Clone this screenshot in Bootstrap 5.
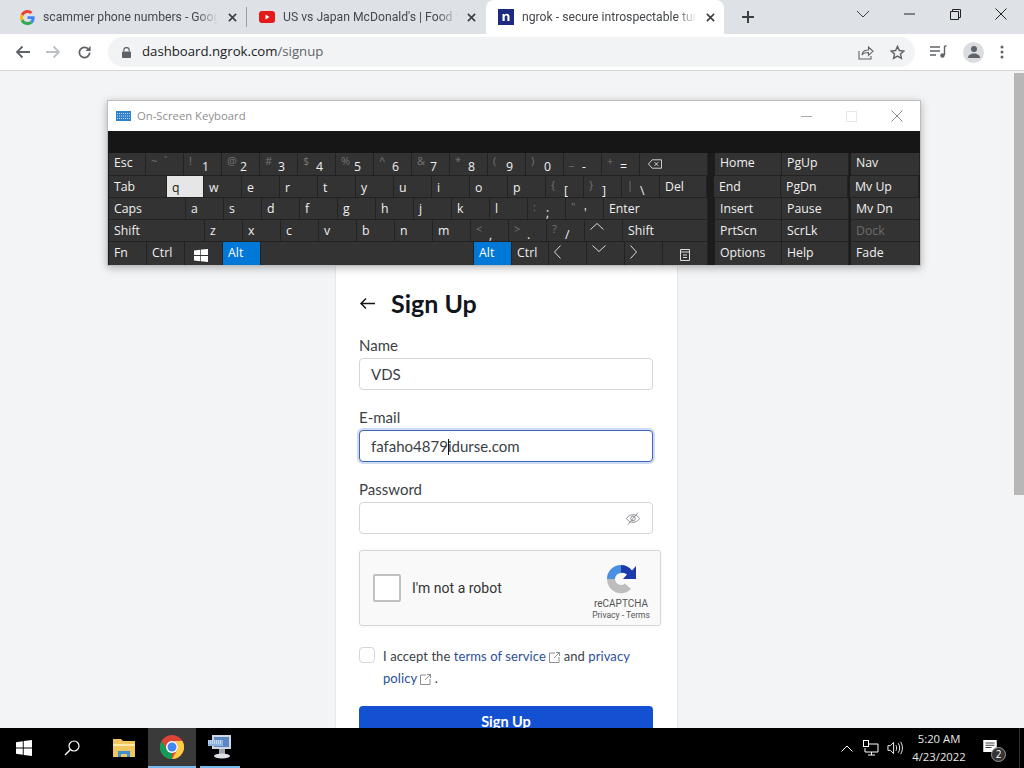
<!DOCTYPE html>
<html lang="en">
<head>
<meta charset="utf-8">
<title>ngrok - secure introspectable tunnels</title>
<link rel="stylesheet" href="https://cdn.jsdelivr.net/npm/bootstrap@5.3.0/dist/css/bootstrap.min.css">
<style>
html,body{height:768px;overflow:hidden}
body{width:1024px;font-family:"Open Sans","Liberation Sans",sans-serif;background:#f3f4f6}
.shell{height:768px;position:relative}
.tabstrip{height:34px;background:#dee1e6;padding-left:8px}
.tabitem{width:238px;height:34px;font-family:Roboto,"Liberation Sans",sans-serif;font-size:12.200px;color:#45484c;padding:0 8px 0 12px;white-space:nowrap}
.tabitem.tab-on{background:#fff;border-radius:8px 8px 0 0;margin-left:1px}
.tabsep{width:1px;height:20px;background:#9aa0a6;align-self:center}
.tabtitle{width:175px;overflow:hidden;margin-left:8px;-webkit-mask-image:linear-gradient(90deg,#000 88%,transparent);mask-image:linear-gradient(90deg,#000 88%,transparent)}
.tabx{margin-left:auto;margin-right:1px}
.plus{margin-left:18px}
.winctl{margin-left:auto;width:168px;height:28px;align-self:flex-start;padding-right:17px}
.toolbar{height:37px;background:#fff;border-bottom:1px solid #d3d5d8;padding-left:15px}
.navicons{width:93px}
.omnibox{width:807px;height:30px;background:#f1f3f4;border-radius:15px;padding:0 10px 0 14px;font-size:13.200px;color:#5f6368}
.omnibox b{font-weight:400;color:#202124}
.locksp{margin-right:11px}
.toolend{margin-left:15px;width:74px}
.avatarbg{width:21px;height:21px;border-radius:50%;background:#dadce0}
.pagearea{height:657px;overflow:hidden;position:relative;padding-left:335px}
.signcol{width:343px;height:550px;margin-top:130px;background:#fff;border:1px solid #e6e8ea;padding:86px 24px 0 23px;font-family:Lato,"Liberation Sans",sans-serif;color:#3c3f46;flex:none}
.titlerow{height:30px;margin-bottom:18px}
.signtitle{font-size:25px;font-weight:700;color:#12151c;margin:0 0 0 16px;line-height:30px}
.form-label.fieldlabel{font-size:15px;line-height:18px;margin-bottom:4px;display:block;color:#3c3f46}
.form-control.fieldbox{width:294px;height:32px;border:1px solid #d4d6da;border-radius:4px;background:#fff;font-size:15px;line-height:18px;padding:0 12px 0 11px;margin-bottom:18px;color:#3c3f46}
.form-control.fieldbox.fieldfocus{border:1px solid #3f66b5;box-shadow:0 0 0 2px #cfdbf3}
.caret{width:1px;height:16px;background:#111;display:inline-block;margin:0 -1px 0 0;vertical-align:-3px}
.robotbox{width:302px;height:76px;background:#f9f9f9;border:1px solid #d6d6d6;border-radius:3px;box-shadow:0 0 3px rgba(0,0,0,.08);margin-top:-2px;padding-left:13px;font-family:Roboto,"Liberation Sans",sans-serif}
.robotcheck{width:28px;height:28px;background:#fff;border:2px solid #c1c1c1;border-radius:2px}
.robottext{font-size:14px;color:#333;margin-left:11px}
.robotlogo{margin-left:auto;width:70px;margin-right:4px;padding-top:8px;color:#555}
.robotlogo svg{margin-bottom:2px}
.robotlogo span{font-size:10px;line-height:13px}
.robotlogo small{font-size:8.500px;line-height:11px;white-space:nowrap}
.acceptrow{margin-top:19px;font-size:13px;letter-spacing:.08px;line-height:22px;height:44px}
.form-check-input.acceptbox{width:16px;height:16px;border:1px solid #d4d6da;border-radius:4px;margin:2px 8px 0 0;flex:none}
.acceptrow a{color:#2b4f9b;text-decoration:none}
.btn.signbtn{width:294px;height:44px;margin-top:17px;background:#1450d2;border:0;color:#fff;font-size:14.500px;font-weight:700;border-radius:4px 4px 0 0;padding:0 0 12px;line-height:32px}
.scrollthumb{position:absolute;right:0;top:2px;width:10px;height:422px;background:#b7b7b7}
.taskbar{height:40px;background:#000;color:#fff;font-size:12px}
.tbslot{width:48px;height:40px}
.tbslot.tb-shift{margin-left:4px}
.tbslot.tb-active{background:#3a3a3a;border-bottom:2px solid #76b9ed}
.tbslot.tb-open{width:40px;margin-left:4px;border-bottom:2px solid #76b9ed}
.tray{margin-left:auto;height:40px}
.traychev{margin-right:10px}
.clockbox{width:70px;font-size:11.300px;line-height:18px;margin-left:1px;text-align:center;color:#e8e8e8}
.notearea{width:46px;height:40px;position:relative;margin-left:4px}
.noteicon{margin:-4px 0 0 5px}
.notebadge{position:absolute;left:13px;top:19px;width:15px;height:15px;border-radius:50%;background:#333;border:1px solid #999;font-size:10px;line-height:13px;text-align:center}
.desksep{position:absolute;left:41px;top:0;width:1px;height:40px;background:#333}
.oskwin{position:absolute;left:107px;top:100px;width:814px;height:166px;border:1px solid #bdbdbd;background:#1c1c1c;box-shadow:0 2px 8px rgba(0,0,0,.28)}
.osktitle{height:30px;background:#fff;font-size:11.300px;color:#8f8f8f;padding-left:8px}
.osktitle svg.oskglyph{margin-right:6px}
.oskctrls{margin-left:auto;width:119px;padding-right:17px}
.oskband{height:22px;background:#161616}
.oskrow{height:22px;padding-left:1px}
.oskrow.rowfirst{height:23px}
.oskrow.rowfirst .keypad{height:23px;padding-top:2px}
.oskrow.rowlast{height:23px}
.oskrow.rowlast .keypad{height:23px;border-bottom:0}
.keypad{display:flex;font-size:12.300px;line-height:16px;color:#f0f0f0;background:#333;height:22px;width:38px;padding:3px 0 0 5px;border-right:1px solid #222;border-bottom:1px solid #222;flex:none;overflow:hidden}
.keypad.kw37{width:37px}
.keypad.kwtab{width:58px}
.keypad.kwcaps{width:77px}
.keypad.kwshift{width:96px}
.keypad.kwback{width:68px;padding-left:8px}
.keypad.kwdel{width:47px}
.keypad.kwenter{width:104px}
.keypad.kwshift2{width:85px}
.keypad.kwspace{width:213px}
.keypad.kwmenu{width:45px}
.keypad.kwh{width:67px}
.keypad.kwp{width:67px}
.keypad.kwnav{width:69px}
.keypad.kgap{margin-left:7px}
.keypad.kgap2{margin-left:2px}
.keypad.keyon{background:#e6e6e6;color:#222}
.keypad.keyblue{background:#0078d7;color:#fff}
.keypad.keydim{color:#6d6d6d}
.keypad.keylow{padding-top:4px}
.keysym{font-size:11px;color:#747474;width:13px;flex:none;line-height:14px;margin-top:-1px}
.keydig{line-height:14px;margin-top:5px}
.iconctr{align-items:center;padding-left:9px}
</style>
</head>
<body>
<div class="shell d-flex flex-column">
  <div class="tabstrip d-flex align-items-center">
    <div class="tabitem d-flex align-items-center">
      <svg width="15" height="15" viewBox="0 0 48 48"><path fill="#EA4335" d="M24 9.500c3.500 0 6.700 1.200 9.200 3.600l6.900-6.900C35.900 2.400 30.500 0 24 0 14.600 0 6.500 5.400 2.600 13.200l8 6.200C12.400 13.700 17.700 9.500 24 9.500z"/><path fill="#4285F4" d="M47 24.500c0-1.600-.1-3.100-.4-4.500H24v9h12.900c-.6 3-2.200 5.500-4.800 7.200l7.700 6c4.500-4.200 7.200-10.300 7.200-17.700z"/><path fill="#FBBC05" d="M10.600 28.600C10.100 27.200 9.800 25.600 9.800 24s.3-3.200.8-4.600l-8-6.200C.9 16.400 0 20.100 0 24s.9 7.600 2.600 10.800l8-6.200z"/><path fill="#34A853" d="M24 48c6.500 0 11.900-2.100 15.900-5.800l-7.700-6c-2.200 1.400-4.900 2.300-8.200 2.300-6.300 0-11.600-4.200-13.500-9.900l-8 6.200C6.500 42.600 14.600 48 24 48z"/></svg>
      <span class="tabtitle ms-2">scammer phone numbers - Google</span>
      <svg class="tabx" width="9" height="9" viewBox="0 0 10 10"><path d="M1 1l8 8M9 1l-8 8" stroke="#3c4043" stroke-width="1.800"/></svg>
    </div>
    <div class="tabsep"></div>
    <div class="tabitem d-flex align-items-center">
      <svg width="16" height="12" viewBox="0 0 16 12"><rect width="16" height="12" rx="3" fill="#e61919"/><path d="M6.500 3.500v5l4-2.500z" fill="#fff"/></svg>
      <span class="tabtitle">US vs Japan McDonald's | Food Wars</span>
      <svg class="tabx" width="9" height="9" viewBox="0 0 10 10"><path d="M1 1l8 8M9 1l-8 8" stroke="#3c4043" stroke-width="1.800"/></svg>
    </div>
    <div class="tabitem tab-on d-flex align-items-center">
      <svg width="16" height="16" viewBox="0 0 16 16"><rect width="16" height="16" fill="#1d2a80"/><path d="M4.500 12V5h2v1c.6-.8 1.400-1.200 2.400-1.200 1.700 0 2.600 1 2.600 2.900V12h-2.100V8c0-.9-.4-1.400-1.200-1.400s-1.500.6-1.500 1.500V12z" fill="#fff"/></svg>
      <span class="tabtitle">ngrok - secure introspectable tunnels</span>
      <svg class="tabx" width="9" height="9" viewBox="0 0 10 10"><path d="M1 1l8 8M9 1l-8 8" stroke="#3c4043" stroke-width="1.800"/></svg>
    </div>
    <svg class="plus" width="12" height="12" viewBox="0 0 12 12"><path d="M6 0v12M0 6h12" stroke="#3c4043" stroke-width="2"/></svg>
    <div class="winctl d-flex align-items-center justify-content-between">
      <svg width="14" height="8" viewBox="0 0 14 8"><path d="M1 1l6 6 6-6" fill="none" stroke="#3c4043"/></svg>
      <svg width="11" height="2" viewBox="0 0 11 2"><path d="M0 1h11" stroke="#222"/></svg>
      <svg width="11" height="11" viewBox="0 0 11 11"><path d="M.5 2.500h8v8h-8zM2.500 2.500v-2h8v8h-2" fill="none" stroke="#222"/></svg>
      <svg width="12" height="12" viewBox="0 0 12 12"><path d="M.5.500l11 11M11.500.500l-11 11" stroke="#222"/></svg>
    </div>
  </div>
  <div class="toolbar d-flex align-items-center">
    <div class="navicons d-flex align-items-center gap-3">
      <svg width="15" height="14" viewBox="0 0 15 14"><path d="M15 7H2M7.500 1.500L2 7l5.500 5.500" fill="none" stroke="#5f6368" stroke-width="1.800"/></svg>
      <svg width="15" height="14" viewBox="0 0 15 14"><path d="M0 7h13M7.500 1.500L13 7l-5.500 5.500" fill="none" stroke="#bdc1c6" stroke-width="1.800"/></svg>
      <svg width="15" height="15" viewBox="0 0 16 16"><path d="M13.500 8A5.500 5.500 0 1 1 11.800 4" fill="none" stroke="#5f6368" stroke-width="1.900"/><path d="M14.500 1v5.500H9z" fill="#5f6368"/></svg>
    </div>
    <div class="omnibox d-flex align-items-center">
      <svg width="9" height="11" viewBox="0 0 10 12" class="locksp"><path d="M2 5V3.500a3 3 0 0 1 6 0V5" fill="none" stroke="#5f6368" stroke-width="1.300"/><rect y="5" width="10" height="7" rx="1" fill="#5f6368"/></svg>
      <span><b>dashboard.ngrok.com</b>/signup</span>
      <span class="ms-auto d-flex align-items-center gap-3">
        <svg width="16" height="15" viewBox="0 0 16 15"><path d="M1 6v8h12v-3" fill="none" stroke="#5f6368" stroke-width="1.100"/><path d="M4 10c.5-3.500 3-5 6.500-5V2L15 6.300l-4.500 4V7.500C8 7.500 5.500 8 4 10z" fill="none" stroke="#5f6368" stroke-width="1.100"/></svg>
        <svg width="15" height="15" viewBox="0 0 16 16"><path d="M8 1.500l2 4.400 4.800.5-3.600 3.200 1 4.700L8 11.900 3.800 14.300l1-4.700L1.200 6.400 6 5.900z" fill="none" stroke="#5f6368" stroke-width="1.500"/></svg>
      </span>
    </div>
    <div class="toolend d-flex align-items-center justify-content-between">
      <svg width="17" height="14" viewBox="0 0 17 14"><path d="M0 2h10M0 6h10M0 10h6M14.500 1v9" stroke="#5f6368" stroke-width="1.400"/><path d="M14.500 1h2" stroke="#5f6368" stroke-width="1.400"/><circle cx="12.500" cy="10.500" r="2.200" fill="#5f6368"/></svg>
      <span class="avatarbg d-flex align-items-center justify-content-center"><svg width="14" height="14" viewBox="0 0 14 14"><circle cx="7" cy="4" r="3" fill="#5f6368"/><path d="M1 13c0-3 3-4.500 6-4.500s6 1.500 6 4.500z" fill="#5f6368"/></svg></span>
      <svg width="4" height="14" viewBox="0 0 4 14"><circle cx="2" cy="2" r="1.500" fill="#5f6368"/><circle cx="2" cy="7" r="1.500" fill="#5f6368"/><circle cx="2" cy="12" r="1.500" fill="#5f6368"/></svg>
    </div>
  </div>
  <div class="pagearea d-flex">
    <div class="signcol">
      <div class="titlerow d-flex align-items-center">
        <svg width="16" height="13" viewBox="0 0 16 13"><path d="M16 6.500H2M7 1.500L2 6.500l5 5" fill="none" stroke="#12151c" stroke-width="1.500"/></svg>
        <h1 class="signtitle">Sign Up</h1>
      </div>
      <label class="form-label fieldlabel">Name</label>
      <div class="form-control fieldbox d-flex align-items-center">VDS</div>
      <label class="form-label fieldlabel">E-mail</label>
      <div class="form-control fieldbox fieldfocus d-flex align-items-center"><span>fafaho4879<i class="caret"></i>idurse.com</span></div>
      <label class="form-label fieldlabel">Password</label>
      <div class="form-control fieldbox d-flex align-items-center justify-content-end">
        <svg width="14" height="13" viewBox="0 0 14 13"><path d="M.5 6.500C2 4 4.300 2.700 7 2.700s5 1.300 6.500 3.800C12 9 9.700 10.300 7 10.300S2 9 .5 6.500z" fill="none" stroke="#8d8f94"/><circle cx="7" cy="6.500" r="2.300" fill="none" stroke="#8d8f94"/><path d="M2 12.500L12 .5" stroke="#8d8f94"/></svg>
      </div>
      <div class="robotbox d-flex align-items-center">
        <div class="robotcheck"></div>
        <div class="robottext">I'm not a robot</div>
        <div class="robotlogo d-flex flex-column align-items-center">
          <svg width="32" height="32" viewBox="0 0 32 32"><path d="M2 16A14 14 0 0 1 16 2v8a6 6 0 0 0-6 6z" fill="#4a90e2"/><path d="M16 2A14 14 0 0 1 27 7.500L31 3v13H18l4-4.500A7 7 0 0 0 16 10z" fill="#1c3aa9"/><path d="M2 16h8a6 6 0 0 0 6 6 6 6 0 0 0 4-1.500l6 5.500A14 14 0 0 1 2 16z" fill="#bdbdbd"/></svg>
          <span>reCAPTCHA</span>
          <small>Privacy - Terms</small>
        </div>
      </div>
      <div class="acceptrow d-flex">
        <input class="form-check-input acceptbox" type="checkbox" aria-label="Accept">
        <div>I accept the <a href="#">terms of service <svg width="11" height="11" viewBox="0 0 11 11"><path d="M6 1H.5v9.500H10V5M7 .5h3.500V4M10.500.5L5 6" fill="none" stroke="#8d8f94"/></svg></a> and <a href="#">privacy policy <svg width="11" height="11" viewBox="0 0 11 11"><path d="M6 1H.5v9.500H10V5M7 .5h3.500V4M10.500.5L5 6" fill="none" stroke="#8d8f94"/></svg></a> .</div>
      </div>
      <button class="signbtn btn btn-primary" type="button">Sign Up</button>
    </div>
    <div class="scrollthumb"></div>
  </div>
  <div class="taskbar d-flex align-items-center">
    <div class="tbslot d-flex align-items-center justify-content-center">
      <svg width="16" height="16" viewBox="0 0 16 16"><path d="M0 2.200L6.800 1.200V7.500H0zM7.700 1.100L16 0v7.500H7.700zM0 8.500h6.800v6.300L0 13.800zM7.700 8.500H16V16l-8.300-1.100z" fill="#fff"/></svg>
    </div>
    <div class="tbslot d-flex align-items-center justify-content-center">
      <svg width="16" height="16" viewBox="0 0 16 16"><circle cx="10" cy="6" r="5" fill="none" stroke="#fff" stroke-width="1.200"/><path d="M6.500 9.500L1 15" stroke="#fff" stroke-width="1.400"/></svg>
    </div>
    <div class="tbslot tb-shift d-flex align-items-center justify-content-center">
      <svg width="22" height="18" viewBox="0 0 22 18"><path d="M0 0h8l2 2h12v16H0z" fill="#f0c75e"/><path d="M0 5h22v2H0z" fill="#ffe9a6"/><path d="M5 18v-6h12v6h-3v-3H8v3z" fill="#3f8fd2"/></svg>
    </div>
    <div class="tbslot tb-active d-flex align-items-center justify-content-center">
      <svg width="24" height="24" viewBox="0 0 24 24"><circle cx="12" cy="12" r="12" fill="#db4437"/><path d="M12 24A12 12 0 0 1 1.600 6L7 15a6 6 0 0 0 5 3z" fill="#0f9d58"/><path d="M12 6h10.400A12 12 0 0 1 12 24l5.200-9A6 6 0 0 0 12 6z" fill="#ffcd40"/><circle cx="12" cy="12" r="6" fill="#fff"/><circle cx="12" cy="12" r="4.500" fill="#4285f4"/></svg>
    </div>
    <div class="tbslot tb-open d-flex align-items-center justify-content-center">
      <svg width="24" height="26" viewBox="0 0 24 26"><rect x="4" y="1" width="19" height="14" fill="#cfd8e3"/><rect x="6" y="3" width="15" height="10" fill="#5a86c5"/><rect x="0" y="6" width="15" height="6" fill="#8fb2dd"/><path d="M0 7h14M0 9h14" stroke="#fff" stroke-dasharray="1 1"/><path d="M11 15h6v5h-6z" fill="#9aa3ad"/><ellipse cx="14" cy="22" rx="8" ry="2.500" fill="#dfe3e7"/></svg>
    </div>
    <div class="tray d-flex align-items-center">
      <svg class="traychev" width="12" height="7" viewBox="0 0 12 7"><path d="M.5 6.500L6 1l5.500 5.500" fill="none" stroke="#fff"/></svg>
      <svg width="16" height="16" viewBox="0 0 16 16"><path d="M6 4h9v8H2V8M8.500 12v3M5 15h7" fill="none" stroke="#fff"/><rect x=".5" y=".5" width="5" height="6" fill="none" stroke="#fff"/></svg>
      <svg class="ms-2" width="16" height="16" viewBox="0 0 17 16"><path d="M1 5.500h2.500L7 2v12l-3.500-3.500H1zM9.500 5c1 1.800 1 4.200 0 6M12 3c2 3 2 7 0 10M14.500 1.500c2.500 4 2.500 9 0 13" fill="none" stroke="#fff"/></svg>
      <div class="clockbox"><div>5:20 AM</div><div>4/23/2022</div></div>
      <div class="notearea d-flex align-items-center">
        <svg class="noteicon" width="14" height="12" viewBox="0 0 18 16"><path d="M0 0h18v16H0z" fill="#fff"/><path d="M3 4h12M3 7h12M3 10h8" stroke="#000"/></svg>
        <span class="notebadge">2</span>
        <span class="desksep"></span>
      </div>
    </div>
  </div>
  <div class="oskwin">
    <div class="osktitle d-flex align-items-center">
      <svg class="oskglyph" width="15" height="10" viewBox="0 0 15 10"><rect width="15" height="10" fill="#2f7fc9"/><path d="M1 2.500h13M1 5h13M1 7.500h13" stroke="#bcdcf5" stroke-dasharray="1 1"/></svg>
      <span>On-Screen Keyboard</span>
      <div class="oskctrls d-flex align-items-center justify-content-between">
        <svg width="11" height="1" viewBox="0 0 11 1"><path d="M0 .5h11" stroke="#a8a8a8"/></svg>
        <svg width="11" height="11" viewBox="0 0 11 11"><rect x=".5" y=".5" width="10" height="10" fill="none" stroke="#e8e8e8"/></svg>
        <svg width="12" height="12" viewBox="0 0 12 12"><path d="M.5.500l11 11M11.500.500l-11 11" stroke="#8a8a8a"/></svg>
      </div>
    </div>
    <div class="oskband"></div>
    <div class="oskrow rowfirst d-flex">
      <div class="keypad kw37">Esc</div>
      <div class="keypad"><span class="keysym">~</span><span class="keysym">`</span></div>
      <div class="keypad"><span class="keysym">!</span><span class="keydig">1</span></div>
      <div class="keypad"><span class="keysym">@</span><span class="keydig">2</span></div>
      <div class="keypad"><span class="keysym">#</span><span class="keydig">3</span></div>
      <div class="keypad"><span class="keysym">$</span><span class="keydig">4</span></div>
      <div class="keypad"><span class="keysym">%</span><span class="keydig">5</span></div>
      <div class="keypad"><span class="keysym">^</span><span class="keydig">6</span></div>
      <div class="keypad"><span class="keysym">&amp;</span><span class="keydig">7</span></div>
      <div class="keypad"><span class="keysym">*</span><span class="keydig">8</span></div>
      <div class="keypad"><span class="keysym">(</span><span class="keydig">9</span></div>
      <div class="keypad"><span class="keysym">)</span><span class="keydig">0</span></div>
      <div class="keypad"><span class="keysym">_</span><span class="keydig">-</span></div>
      <div class="keypad"><span class="keysym">+</span><span class="keydig">=</span></div>
      <div class="keypad kwback"><svg class="mt-1" width="14" height="10" viewBox="0 0 15 10"><path d="M4.500.500h10v9h-10L.5 5z" fill="none" stroke="#ddd"/><path d="M7 3l4 4M11 3l-4 4" stroke="#ddd"/></svg></div>
      <div class="keypad kwh kgap">Home</div>
      <div class="keypad kwp">PgUp</div>
      <div class="keypad kwnav kgap2">Nav</div>
    </div>
    <div class="oskrow d-flex">
      <div class="keypad kwtab">Tab</div>
      <div class="keypad kw37 keyon keylow">q</div>
      <div class="keypad keylow">w</div>
      <div class="keypad keylow">e</div>
      <div class="keypad keylow">r</div>
      <div class="keypad keylow">t</div>
      <div class="keypad keylow">y</div>
      <div class="keypad keylow">u</div>
      <div class="keypad keylow">i</div>
      <div class="keypad keylow">o</div>
      <div class="keypad keylow">p</div>
      <div class="keypad"><span class="keysym">{</span><span class="keydig">[</span></div>
      <div class="keypad"><span class="keysym">}</span><span class="keydig">]</span></div>
      <div class="keypad"><span class="keysym">|</span><span class="keydig">\</span></div>
      <div class="keypad kwdel">Del</div>
      <div class="keypad kwh kgap">End</div>
      <div class="keypad kwp">PgDn</div>
      <div class="keypad kwnav kgap2">Mv Up</div>
    </div>
    <div class="oskrow d-flex">
      <div class="keypad kwcaps">Caps</div>
      <div class="keypad">a</div>
      <div class="keypad">s</div>
      <div class="keypad">d</div>
      <div class="keypad">f</div>
      <div class="keypad">g</div>
      <div class="keypad">h</div>
      <div class="keypad">j</div>
      <div class="keypad">k</div>
      <div class="keypad">l</div>
      <div class="keypad"><span class="keysym">:</span><span class="keydig">;</span></div>
      <div class="keypad"><span class="keysym">"</span><span class="keydig">'</span></div>
      <div class="keypad kwenter">Enter</div>
      <div class="keypad kwh kgap">Insert</div>
      <div class="keypad kwp">Pause</div>
      <div class="keypad kwnav kgap2">Mv Dn</div>
    </div>
    <div class="oskrow d-flex">
      <div class="keypad kwshift">Shift</div>
      <div class="keypad">z</div>
      <div class="keypad">x</div>
      <div class="keypad">c</div>
      <div class="keypad">v</div>
      <div class="keypad">b</div>
      <div class="keypad">n</div>
      <div class="keypad">m</div>
      <div class="keypad"><span class="keysym">&lt;</span><span class="keydig">,</span></div>
      <div class="keypad"><span class="keysym">&gt;</span><span class="keydig">.</span></div>
      <div class="keypad"><span class="keysym">?</span><span class="keydig">/</span></div>
      <div class="keypad"><svg width="14" height="7" viewBox="0 0 14 7"><path d="M.5 6.500L7 .5l6.500 6" fill="none" stroke="#ddd"/></svg></div>
      <div class="keypad kwshift2">Shift</div>
      <div class="keypad kwh kgap">PrtScn</div>
      <div class="keypad kwp">ScrLk</div>
      <div class="keypad kwnav kgap2 keydim">Dock</div>
    </div>
    <div class="oskrow rowlast d-flex">
      <div class="keypad">Fn</div>
      <div class="keypad">Ctrl</div>
      <div class="keypad iconctr"><svg width="14" height="13" viewBox="0 0 14 13"><path d="M0 1.500L6.300.7V6H0zM7 .6L14 0v6H7zM0 7h6.300v5.300L0 11.500zM7 7h7v6l-7-.7z" fill="#fff"/></svg></div>
      <div class="keypad keyblue">Alt</div>
      <div class="keypad kwspace"></div>
      <div class="keypad keyblue">Alt</div>
      <div class="keypad kw37">Ctrl</div>
      <div class="keypad"><svg width="7" height="14" viewBox="0 0 7 14"><path d="M6.500.5L.5 7l6 6.500" fill="none" stroke="#ddd"/></svg></div>
      <div class="keypad"><svg width="14" height="7" viewBox="0 0 14 7"><path d="M.5.500L7 6.500l6.500-6" fill="none" stroke="#ddd"/></svg></div>
      <div class="keypad"><svg width="7" height="14" viewBox="0 0 7 14"><path d="M.5.5L6.500 7l-6 6.500" fill="none" stroke="#ddd"/></svg></div>
      <div class="keypad kwmenu iconctr"><svg class="ms-2" width="10" height="12" viewBox="0 0 10 12"><path d="M.5.500h9v11h-9zM.5 3h9M3 6h4M3 8.500h4" fill="none" stroke="#ddd"/></svg></div>
      <div class="keypad kwh kgap">Options</div>
      <div class="keypad kwp">Help</div>
      <div class="keypad kwnav kgap2">Fade</div>
    </div>
  </div>
</div>
</body>
</html>
